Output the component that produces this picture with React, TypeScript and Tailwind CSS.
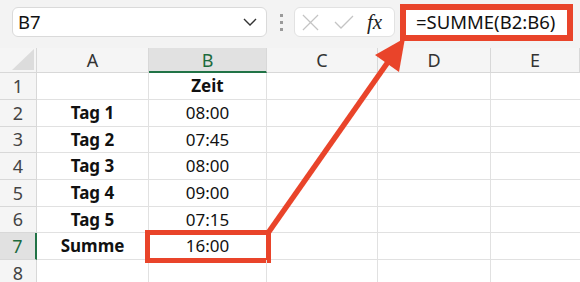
import React from 'react';

const cols = ['A', 'B', 'C', 'D', 'E'];
const rows: [string, string][] = [
    ['', 'Zeit'],
    ['Tag 1', '08:00'],
    ['Tag 2', '07:45'],
    ['Tag 3', '08:00'],
    ['Tag 4', '09:00'],
    ['Tag 5', '07:15'],
    ['Summe', '16:00'],
    ['', ''],
];
const rowH = ['h-[27px]', 'h-[27px]', 'h-[26px]', 'h-[27px]', 'h-[27px]', 'h-[26px]', 'h-[27px]', 'h-[27px]'];

export default function App() {
    return (
        <div
            className="relative h-[282px] w-[580px] overflow-hidden bg-white text-[#111]"
            style={{ fontFamily: '"Noto Sans", "Open Sans", sans-serif' }}
        >
            {/* formula bar */}
            <div className="flex h-[48px] items-start bg-[#f3f3f3] pt-[4px]">
                <div className="ml-[12px] mt-[3px] flex h-[30px] w-[255px] items-center justify-between rounded-[6px] border border-[#dadada] bg-white pl-[5px] pr-[9px]">
                    <span className="text-[18.5px] leading-none">B7</span>
                    <svg viewBox="0 0 14 8" className="h-[8px] w-[14px]" fill="none" stroke="#333" strokeWidth="1.4">
                        <path d="M1 1l6 6 6-6" />
                    </svg>
                </div>
                <div className="ml-[13px] mt-[10px] flex flex-col gap-[4px]">
                    <span className="h-[3px] w-[3px] bg-[#9a9a9a]" />
                    <span className="h-[3px] w-[3px] bg-[#9a9a9a]" />
                    <span className="h-[3px] w-[3px] bg-[#9a9a9a]" />
                </div>
                <div className="ml-[11px] mt-[3px] flex h-[30px] w-[101px] items-center rounded-[6px] border border-[#e2e2e2] bg-white">
                    <svg viewBox="0 0 18 18" className="ml-[7px] h-[17px] w-[17px]" fill="none" stroke="#c4c4c4" strokeWidth="1.3">
                        <path d="M1 1l16 16M17 1L1 17" />
                    </svg>
                    <svg viewBox="0 0 20 14" className="ml-[15px] h-[14px] w-[20px]" fill="none" stroke="#c4c4c4" strokeWidth="1.3">
                        <path d="M1 7l6 6L19 1" />
                    </svg>
                    <span
                        className="ml-[13px] text-[21px] italic leading-none text-[#222]"
                        style={{ fontFamily: '"Liberation Serif", "DejaVu Serif", serif' }}
                    >
                        fx
                    </span>
                </div>
                <div className="ml-[5px] flex h-[37px] w-[173px] items-center border-[6px] border-[#e9442a] bg-white pl-[10px]">
                    <span className="text-[18.5px] leading-none">=SUMME(B2:B6)</span>
                </div>
            </div>

            {/* grid */}
            <div className="grid grid-cols-[37px_112px_118px_111px_113px_1fr]">
                <div className="relative h-[25px] border-r border-b border-[#d8d8d8] bg-[#f5f5f5]">
                    <svg viewBox="0 0 22 21" className="absolute bottom-[2px] right-[2px] h-[21px] w-[22px]">
                        <polygon points="22,0 22,21 0,21" fill="#dcdcdc" />
                    </svg>
                </div>
                {cols.map((c) =>
                    c === 'B' ? (
                        <div
                            key={c}
                            className="flex h-[25px] items-center justify-center border-r border-b-2 border-r-[#d8d8d8] border-b-[#217346] bg-[#e1e1e1] pt-[1px] text-[18px] text-[#1d6b3d]"
                        >
                            {c}
                        </div>
                    ) : (
                        <div
                            key={c}
                            className="flex h-[25px] items-center justify-center border-r border-b border-[#d8d8d8] bg-[#f5f5f5] pt-[1px] text-[18px] text-[#333]"
                        >
                            {c}
                        </div>
                    ),
                )}
                {rows.map(([a, b], i) => (
                    <React.Fragment key={i}>
                        {i === 6 ? (
                            <div
                                className={`flex ${rowH[i]} items-center justify-center border-r-2 border-b border-r-[#217346] border-b-[#d8d8d8] bg-[#e1e1e1] text-[18px] text-[#1d6b3d]`}
                            >
                                {i + 1}
                            </div>
                        ) : (
                            <div
                                className={`flex ${rowH[i]} items-center justify-center border-r border-b border-[#d8d8d8] bg-[#f5f5f5] text-[18px] text-[#444]`}
                            >
                                {i + 1}
                            </div>
                        )}
                        <div className={`flex ${rowH[i]} items-center justify-center border-r border-b border-[#e1e1e1] text-[17px] font-bold`}>
                            {a}
                        </div>
                        <div
                            className={`relative flex ${rowH[i]} items-center justify-center border-r border-b border-[#e1e1e1] text-[17px] ${i === 0 ? 'font-bold' : ''}`}
                        >
                            {b}
                            {i === 6 && (
                                <div className="absolute -top-[3px] -right-[5px] -bottom-[4px] -left-[4px] border-[5px] border-[#e9442a]" />
                            )}
                        </div>
                        <div className={`${rowH[i]} border-r border-b border-[#e1e1e1]`} />
                        <div className={`${rowH[i]} border-r border-b border-[#e1e1e1]`} />
                        <div className={`${rowH[i]} border-b border-[#e1e1e1]`} />
                    </React.Fragment>
                ))}
            </div>

            {/* arrow annotation */}
            <svg className="pointer-events-none absolute left-0 top-0 h-[282px] w-[580px]" viewBox="0 0 580 282">
                <line x1="268" y1="233" x2="388" y2="62" stroke="#e9442a" strokeWidth="5.5" />
                <polygon points="405,38 375,55 399,72" fill="#e9442a" />
            </svg>
        </div>
    );
}
